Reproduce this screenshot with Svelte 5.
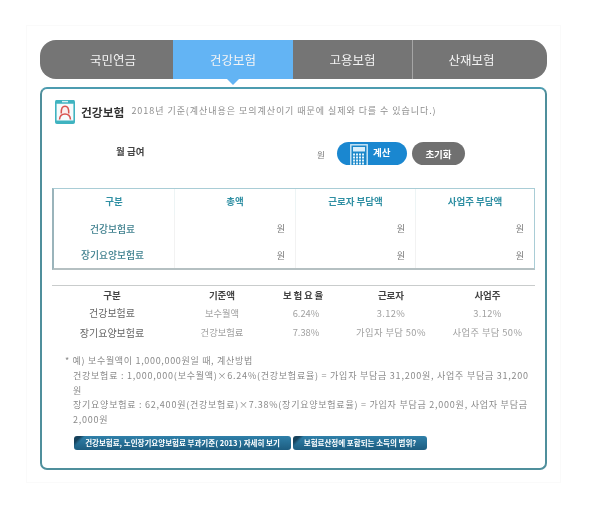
<script>
  const tabs = ['국민연금', '건강보험', '고용보험', '산재보험'];
  const calcRows = ['건강보험료', '장기요양보험료'];
</script>

<div class="page">
  <div class="card">
    <nav class="tabs">
      {#each tabs as t, i}
        <div class="tab" class:active={i === 1}>{t}</div>
      {/each}
    </nav>
    <section class="panel">
      <header class="head">
        <svg class="ico" viewBox="0 0 20 25" width="20" height="25">
          <rect x="0.8" y="1.8" width="18.4" height="22.4" rx="1.5" fill="#f6fbfc" stroke="#3fb3c0" stroke-width="1.6"/>
          <rect x="0.5" y="1" width="19" height="3.8" rx="1" fill="#3fb3c0"/>
          <rect x="7" y="1.9" width="6" height="1.4" fill="#d8f1f4"/>
          <rect x="0.5" y="21.4" width="19" height="3" rx="1" fill="#3fb3c0"/>
          <path d="M6.2 14.5 C6 9.5 7.5 7.2 10 7.2 C12.5 7.2 14 9.5 13.8 14.5" fill="#fbeeee" stroke="#d9534f" stroke-width="1.5"/>
          <path d="M4.5 20.5 C4.8 16.5 7 15 10 15 C13 15 15.2 16.5 15.5 20.5" fill="none" stroke="#d9534f" stroke-width="1.5"/>
        </svg>
        <h2>건강보험</h2>
        <p>2018년 기준(계산내용은 모의계산이기 때문에 실제와 다를 수 있습니다.)</p>
      </header>

      <div class="form">
        <span class="lbl">월 급여</span>
        <span class="unit">원</span>
        <button class="calc">
          <svg viewBox="0 0 18 22" width="18" height="22">
            <rect x="0.8" y="0.8" width="16.4" height="22" fill="#1a87c9" stroke="#cfe8f7" stroke-width="1.4"/>
            <rect x="3" y="3" width="12" height="4.5" fill="#d9eefa"/>
            <g fill="#e4f3fb">
              {#each [9.5, 12.5, 15.5, 18.5] as y}
                {#each [3, 6, 9, 12] as x}
                  <rect {x} {y} width="2" height="2"/>
                {/each}
              {/each}
            </g>
          </svg>
          <span>계산</span>
        </button>
        <button class="reset">초기화</button>
      </div>

      <div class="calc-table">
        <div class="row hdr">
          <div class="c">구분</div><div class="c">총액</div><div class="c">근로자 부담액</div><div class="c">사업주 부담액</div>
        </div>
        {#each calcRows as r}
          <div class="row">
            <div class="c name">{r}</div><div class="c amt">원</div><div class="c amt">원</div><div class="c amt">원</div>
          </div>
        {/each}
      </div>

      <div class="rate-table">
        <div class="rrow top"><b>구분</b><b>기준액</b><b class="wide">보험요율</b><b>근로자</b><b>사업주</b></div>
        <div class="rrow"><span class="dark">건강보험료</span><span>보수월액</span><span class="pct">6.24%</span><span>3.12%</span><span>3.12%</span></div>
        <div class="rrow last"><span class="dark">장기요양보험료</span><span>건강보험료</span><span class="pct">7.38%</span><span>가입자 부담 50%</span><span>사업주 부담 50%</span></div>
      </div>

      <div class="note">
        <div class="first">* 예) 보수월액이 1,000,000원일 때, 계산방법</div>
        <p>건강보험료 : 1,000,000(보수월액)×6.24%(건강보험료율) = 가입자 부담금 31,200원, 사업주 부담금 31,200<br>원</p>
        <p>장기요양보험료 : 62,400원(건강보험료)×7.38%(장기요양보험료율) = 가입자 부담금 2,000원, 사업자 부담금<br>2,000원</p>
      </div>

      <div class="links">
        <a class="l1">건강보험료, 노인장기요양보험료 부과기준( 2013 ) 자세히 보기</a>
        <a class="l2">보험료산정에 포함되는 소득의 범위?</a>
      </div>
    </section>
  </div>
</div>

<style>
  :global(body) {
    margin: 0;
    background: #fff;
  }
  .page {
    width: 589px;
    height: 508px;
    box-sizing: border-box;
    padding: 25px 28px 0 26px;
    font-family: "Noto Sans CJK KR", "Noto Sans", sans-serif;
    color: #888;
    overflow: hidden;
    filter: blur(0.3px);
  }
  .card {
    box-sizing: border-box;
    height: 458px;
    border: 1px solid #fafafa;
    padding: 14px 13px 0 13px;
  }
  .tabs {
    position: relative;
    display: grid;
    grid-template-columns: 133px 120px 119px 134px;
    height: 39px;
    border-radius: 16px;
    background: #757575;
  }
  .tab {
    display: flex;
    align-items: center;
    justify-content: center;
    color: #f4f4f4;
    font-size: 12.5px;
    box-sizing: border-box;
  }
  .tab:first-child {
    border-radius: 16px 0 0 16px;
    padding-left: 13px;
  }
  .tab:last-child {
    border-radius: 0 16px 16px 0;
    border-left: 1px solid #a5a5a5;
    padding-right: 16px;
  }
  .tab.active {
    background: #63b4f4;
    position: relative;
  }
  .tab.active::after {
    content: "";
    position: absolute;
    left: 50%;
    top: 100%;
    margin-left: -6px;
    border: 6px solid transparent;
    border-top-color: #63b4f4;
    border-bottom: 0;
  }
  .panel {
    margin-top: 8px;
    box-sizing: border-box;
    width: 507px;
    height: 383px;
    border: 2px solid #4f8f9c;
    border-top-color: #4c9cb0;
    border-radius: 7px;
    padding: 9px 11px 0 10px;
    background: #fff;
  }
  .head {
    display: flex;
    align-items: center;
    height: 26px;
    margin-left: 3px;
  }
  .ico { flex: none; }
  .head h2 {
    margin: 0 0 0 6px;
    font-size: 11.8px;
    font-weight: 700;
    color: #333;
  }
  .head p {
    margin: 0 0 2px 7px;
    font-size: 9px;
    color: #8e8e8e;
    letter-spacing: 0.95px;
    white-space: nowrap;
  }
  .form {
    height: 23px;
    margin-top: 18px;
    display: flex;
    align-items: center;
  }
  .lbl {
    margin-left: 64px;
    width: 201px;
    font-size: 9.5px;
    font-weight: 700;
    color: #444;
    margin-top: -6px;
  }
  .unit {
    width: 20px;
    font-size: 8.5px;
    color: #777;
  }
  .calc, .reset {
    border: 0;
    padding: 0;
    height: 23px;
    border-radius: 12px;
    color: #fff;
    font: inherit;
    font-size: 9.5px;
    font-weight: 700;
    display: flex;
    align-items: center;
    overflow: hidden;
  }
  .calc {
    width: 70px;
    background: #1a87d0;
    padding-left: 13px;
    box-sizing: border-box;
    gap: 5px;
  }
  .calc svg { margin-top: 3px; flex: none; }
  .calc span { margin-top: -4px; }
  .reset {
    margin-left: 5px;
    width: 53px;
    background: #707070;
    justify-content: center;
  }
  .calc-table {
    margin-top: 23px;
    box-sizing: border-box;
    width: 483px;
    height: 82px;
    border: 1px solid #a9cdd6;
    border-bottom: 2px solid #b5c0c2;
    border-left: 2px solid #9ab4bb;
  }
  .row {
    display: grid;
    grid-template-columns: 120px 121px 120px 1fr;
    height: 26px;
    align-items: center;
  }
  .row:nth-child(2) { height: 27px; }
  .c {
    font-size: 9.8px;
    height: 100%;
    display: flex;
    align-items: center;
    justify-content: center;
    box-sizing: border-box;
  }
  .hdr .c {
    color: #2f8fa3;
    font-weight: 700;
    font-size: 9.5px;
    border-left: 1px solid #edf4f5;
    padding-bottom: 2px;
  }
  .hdr .c:first-child { border-left: 0; }
  .c.name {
    color: #3d7f8d;
    font-weight: 500;
    padding-right: 3px;
  }
  .c.amt {
    justify-content: flex-end;
    padding-right: 10px;
    color: #777;
    font-size: 9px;
    border-left: 1px solid #f2f2f2;
  }
  .rate-table {
    margin-top: 15px;
    width: 483px;
    border-top: 1px solid #c9cccc;
  }
  .rrow {
    display: grid;
    grid-template-columns: 120px 100px 70px 98px 95px;
    height: 19px;
    align-items: center;
    text-align: center;
    font-size: 9.3px;
    color: #a0a0a0;
    white-space: nowrap;
  }
  .rrow.top { height: 17px; }
  .rrow.last { height: 20px; }
  .rrow b {
    color: #444;
    font-weight: 700;
    font-size: 9.5px;
  }
  .rrow b.wide {
    letter-spacing: 1.8px;
    margin-left: -6px;
  }
  .pct { padding-right: 2px; }
  .dark {
    color: #666;
    font-size: 10px;
  }
  .rrow span:nth-child(4), .rrow span:nth-child(5) {
    letter-spacing: 0.4px;
  }
  .note {
    margin: 12px 0 0 13px;
    width: 463px;
    font-size: 9px;
    line-height: 14.8px;
    color: #8a8a8a;
    letter-spacing: 0.76px;
  }
  .note .first {
    white-space: nowrap;
    letter-spacing: 0.68px;
  }
  .note p {
    margin: 0 0 0 8px;
    white-space: nowrap;
  }
  .links {
    margin: 8px 0 0 22px;
    display: flex;
    gap: 2px;
  }
  .links a {
    box-sizing: border-box;
    height: 14px;
    border-radius: 3px;
    background:
      linear-gradient(135deg, #16425c 0 5px, transparent 8px),
      linear-gradient(#2f80a9, #1d5d80);
    color: #fff;
    font-size: 7.5px;
    font-weight: 700;
    display: flex;
    align-items: center;
    justify-content: center;
    white-space: nowrap;
  }
  .l1 { width: 217px; }
  .l2 { width: 134px; }
</style>
